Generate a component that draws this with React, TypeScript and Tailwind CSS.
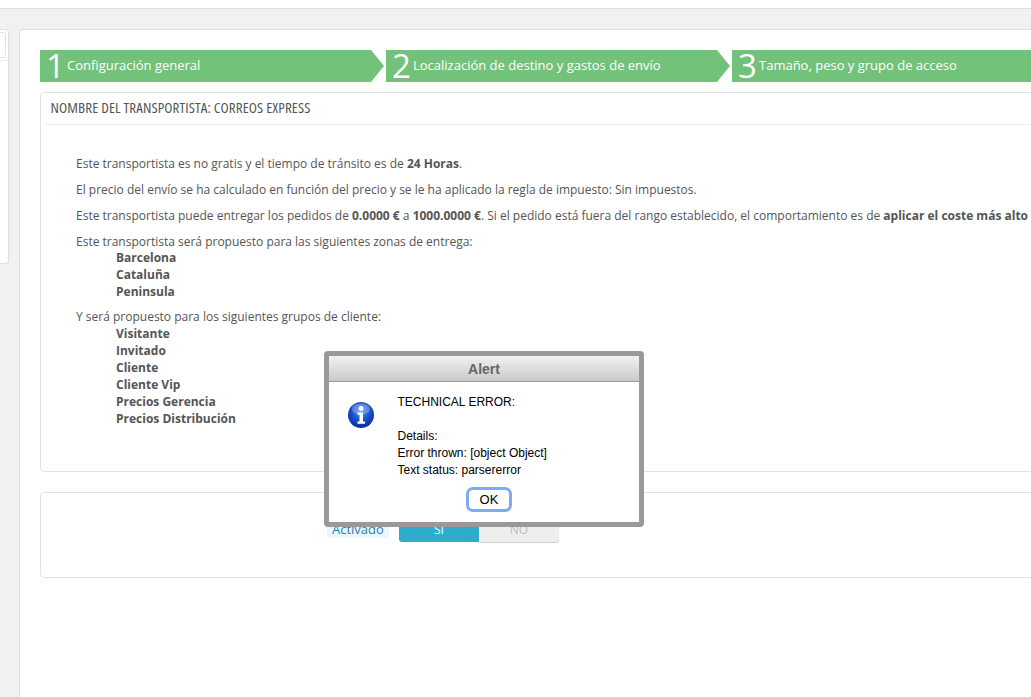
const zones = ["Barcelona", "Cataluña", "Peninsula"];
const groups = ["Visitante", "Invitado", "Cliente", "Cliente Vip", "Precios Gerencia", "Precios Distribución"];

function Step({ n, label }: { n: number; label: string }) {
  return (
    <div className="flex h-8 w-[344px] shrink-0 items-center bg-[#72c279] pl-[6px] text-white [clip-path:polygon(0_0,331px_0,344px_50%,331px_100%,0_100%)]">
      <span className="w-[21px] text-[33px] leading-8 font-normal">{n}</span>
      <span className="-mt-[2px] text-[13px] leading-8">{label}</span>
    </div>
  );
}

function NameList({ items, className }: { items: string[]; className: string }) {
  return (
    <ul className={className}>
      {items.map((item) => (
        <li key={item}>{item}</li>
      ))}
    </ul>
  );
}

function InfoIcon() {
  return (
    <svg width="28" height="28" viewBox="0 0 28 28" className="shrink-0">
      <defs>
        <radialGradient id="ball" cx="50%" cy="35%" r="70%">
          <stop offset="0%" stopColor="#4f8df0" />
          <stop offset="60%" stopColor="#1347c4" />
          <stop offset="100%" stopColor="#0a2a90" />
        </radialGradient>
      </defs>
      <circle cx="14" cy="14" r="13" fill="url(#ball)" />
      <ellipse cx="14" cy="8" rx="9" ry="5.5" fill="#ffffff" opacity="0.25" />
      <circle cx="14" cy="7.5" r="2.4" fill="#ffffff" />
      <path d="M10.5 11.5h5.5v9h2v2.2h-7.5v-2.2h2v-6.8h-2z" fill="#ffffff" />
    </svg>
  );
}

function AlertBox() {
  return (
    <div className="absolute top-[351px] left-[324px] h-[176px] w-[320px] rounded-[4px] border-[5px] border-[#999999] bg-white font-['Liberation_Sans',Arial,sans-serif] text-xs leading-[17px] text-black">
      <div className="h-[26px] border-b border-[#999999] bg-gradient-to-b from-[#f2f2f2] to-[#c9c9c9] text-center text-sm leading-[27px] font-bold text-[#666666]">
        Alert
      </div>
      <div className="flex pt-[12px] pl-[18px]">
        <div className="pt-[7px]">
          <InfoIcon />
        </div>
        <div className="ml-[22.5px]">
          <p>TECHNICAL ERROR:</p>
          <p>&nbsp;</p>
          <p>Details:</p>
          <p>Error thrown: [object Object]</p>
          <p>Text status: parsererror</p>
        </div>
      </div>
      <div className="mt-[8px] flex justify-center pl-[10px]">
        <button className="h-[25px] w-[46px] rounded-[7px] border-[3px] border-[#7da9f6] bg-white text-[13px] leading-[17px] text-black">
          OK
        </button>
      </div>
    </div>
  );
}

export default function App() {
  return (
    <div className="relative h-[697px] w-[1031px] overflow-hidden bg-[#eff1f2] font-['Open_Sans',sans-serif] text-xs text-[#555555]">
      <div className="h-[9px] border-b border-[#dcdee0] bg-white" />
      <div className="flex gap-[10px] pt-5">
        <div className="h-[235px] w-[9px] shrink-0 rounded-r-[4px] border-y border-r border-[#dcdee0] bg-white pt-[2px]">
          <div className="h-[26px] w-[6px] rounded-r-[3px] border-y border-r border-[#e4e4e4]" />
          <div className="mt-[2px] border-t border-[#eeeeee]" />
        </div>
        <div className="h-[700px] w-[1120px] shrink-0 rounded-[4px] border border-[#dcdee0] bg-white pt-5 pl-5">
          <div className="flex gap-[2px]">
            <Step n={1} label="Configuración general" />
            <Step n={2} label="Localización de destino y gastos de envío" />
            <Step n={3} label="Tamaño, peso y grupo de acceso" />
          </div>

          <div className="mt-[10px] h-[380px] rounded-[4px] border border-[#e2e2e2] px-[4px]">
            <h3 className="border-b border-[#eeeeee] pb-[2px] pl-[5.5px] text-[15px] leading-[29px] tracking-[0.1px] text-[#555555] [font-stretch:75%]">
              NOMBRE DEL TRANSPORTISTA: CORREOS EXPRESS
            </h3>
            <div className="pt-[30px] pl-[31px] leading-[17px] whitespace-nowrap">
              <p className="mb-[9px]">
                Este transportista es no gratis y el tiempo de tránsito es de <b>24 Horas</b>.
              </p>
              <p className="mb-[9px]">
                El precio del envío se ha calculado en función del precio y se le ha aplicado la regla de impuesto: Sin impuestos.
              </p>
              <p className="mb-[9px]">
                Este transportista puede entregar los pedidos de <b>0.0000 €</b> a <b>1000.0000 €</b>. Si el pedido está fuera del rango establecido, el comportamiento es de <b>aplicar el coste más alto</b>
              </p>
              <p>Este transportista será propuesto para las siguientes zonas de entrega:</p>
              <NameList items={zones} className="-mt-[1px] mb-[8px] pl-10 font-bold" />
              <p>Y será propuesto para los siguientes grupos de cliente:</p>
              <NameList items={groups} className="mb-[7px] pl-10 font-bold" />
            </div>
          </div>

          <div className="mt-5 flex h-[86px] items-start rounded-[4px] border border-[#e2e2e2] pt-[25px] pl-[286px]">
            <span className="mt-[2px] rounded-[2px] bg-[#eaf6fc] px-[5px] text-[13px] leading-[18px] text-[#2f80ab]">Activado</span>
            <div className="ml-[10px] flex text-center text-xs leading-6">
              <span className="h-6 w-20 rounded-l-[3px] bg-[#2eacce] text-white">SI</span>
              <span className="h-6 w-20 rounded-r-[3px] bg-[#eeeeee] text-[#bbbbbb] shadow-[0_1px_1px_#cccccc]">NO</span>
            </div>
          </div>
        </div>
      </div>
      <AlertBox />
    </div>
  );
}
